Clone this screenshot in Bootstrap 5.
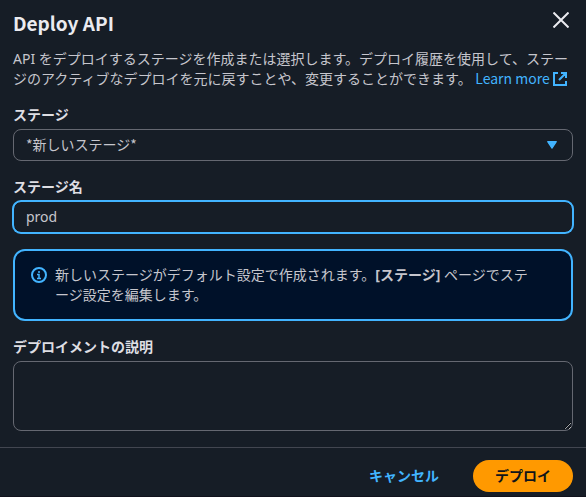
<!DOCTYPE html>
<html lang="ja" data-bs-theme="dark">
<head>
<meta charset="utf-8">
<meta name="viewport" content="width=device-width, initial-scale=1">
<title>Deploy API</title>
<link href="https://cdn.jsdelivr.net/npm/bootstrap@5.3.0/dist/css/bootstrap.min.css" rel="stylesheet">
<style>
  :root { --accent: #42b4ff; --surface: #161d26; --line: #656871; }
  body { background: var(--surface); color: #c6c6cd; font: 14px/20px "Noto Sans", "Noto Sans CJK JP", sans-serif; }
  .deploy-main { padding: 0 13px 16px; }
  .deploy-head { padding: 8px 0 11px; }
  .deploy-title { color: #ebebf0; font-family: "Noto Sans CJK JP", sans-serif; font-size: 19px; line-height: 30px; }
  .close-btn { color: #ebebf0; padding: 4px; line-height: 0; }
  .deploy-link { color: var(--accent); font-family: "Noto Sans CJK JP", sans-serif; line-height: 1; }
  .link-icon { vertical-align: -2px; }
  .field-label { color: #dedee3; font-weight: 700; margin-bottom: 4px; display: block; }
  .field-box.form-control, .field-box.form-select {
    background-color: var(--surface); border: 1px solid var(--line); border-radius: 8px;
    color: #c6c6cd; font-size: 14px; line-height: 20px; padding: 5px 12px; min-height: 32px;
  }
  .field-box.form-select {
    font-family: "Noto Sans CJK JP", sans-serif; padding: 4px 12px 6px;
    background-image: url("data:image/svg+xml,%3Csvg xmlns='http://www.w3.org/2000/svg' viewBox='0 0 10 8'%3E%3Cpath d='M.7 .7h8.600L5 7.200z' fill='%2342b4ff' stroke='%2342b4ff' stroke-width='1.2' stroke-linejoin='round'/%3E%3C/svg%3E");
    background-size: 10px 8px; background-position: right 15px center;
  }
  .field-box.is-active { border-color: var(--accent); box-shadow: 0 0 0 1px var(--accent); }
  .field-box.desc-box { height: 70px; }
  .info-box { background: #001129; border: 2px solid var(--accent); border-radius: 12px; padding: 14px 40px 14px 16px; color: #c6c6cd; gap: 8px; margin: 0; }
  .info-icon { color: var(--accent); margin-top: 2px; }
  .deploy-foot { border-top: 1px solid #424650; border-bottom: 1px solid #11121c; padding: 12px 13px 4px; gap: 12px; }
  .deploy-foot .btn { font-size: 14px; line-height: 20px; font-weight: 700; padding: 4px 20px; border: 2px solid transparent; border-radius: 20px; }
  .deploy-foot .cancel-btn { color: var(--accent); }
  .deploy-foot .submit-btn { background: #ff9900; color: #0f141a; }
</style>
</head>
<body>
<form class="d-flex flex-column">
  <main class="deploy-main d-flex flex-column">
    <header class="deploy-head d-flex justify-content-between align-items-start">
      <h1 class="deploy-title fw-bold m-0">Deploy API</h1>
      <button type="button" class="close-btn btn border-0" aria-label="Close">
        <svg width="16" height="16" viewBox="0 0 16 16" fill="none" stroke="currentColor" stroke-width="2"><path d="M.5 .5l15 15M15.5 .5l-15 15"/></svg>
      </button>
    </header>
    <p class="mb-3">API をデプロイするステージを作成または選択します。デプロイ履歴を使用して、ステージのアクティブなデプロイを元に戻すことや、変更することができます。 <a href="#" class="deploy-link text-decoration-none text-nowrap">Learn more <svg class="link-icon" width="14" height="14" viewBox="0 0 14 14" fill="none" stroke="currentColor" stroke-width="2"><path d="M5 1H1v12h12V9M8 1h5v5M13 1L6 8"/></svg></a></p>
    <div class="mb-3">
      <label class="field-label" for="stage">ステージ</label>
      <select id="stage" class="field-box form-select"><option>*新しいステージ*</option></select>
    </div>
    <div class="mb-3">
      <label class="field-label" for="stageName">ステージ名</label>
      <input id="stageName" type="text" class="field-box is-active form-control" value="prod">
    </div>
    <div class="info-box alert d-flex mb-3" role="status">
      <svg class="info-icon flex-shrink-0" width="16" height="16" viewBox="0 0 16 16" fill="none" stroke="currentColor" stroke-width="2"><circle cx="8" cy="8" r="7"/><path d="M8 4v2M6 7.500h2V11M6 11.500h4" stroke-width="1.500"/></svg>
      <div>新しいステージがデフォルト設定で作成されます。<strong>[ステージ]</strong> ページでステージ設定を編集します。</div>
    </div>
    <div>
      <label class="field-label" for="description">デプロイメントの説明</label>
      <textarea id="description" class="field-box desc-box form-control"></textarea>
    </div>
  </main>
  <footer class="deploy-foot d-flex justify-content-end">
    <button type="button" class="cancel-btn btn">キャンセル</button>
    <button type="submit" class="submit-btn btn">デプロイ</button>
  </footer>
</form>
<script src="https://cdn.jsdelivr.net/npm/bootstrap@5.3.0/dist/js/bootstrap.bundle.min.js"></script>
</body>
</html>
